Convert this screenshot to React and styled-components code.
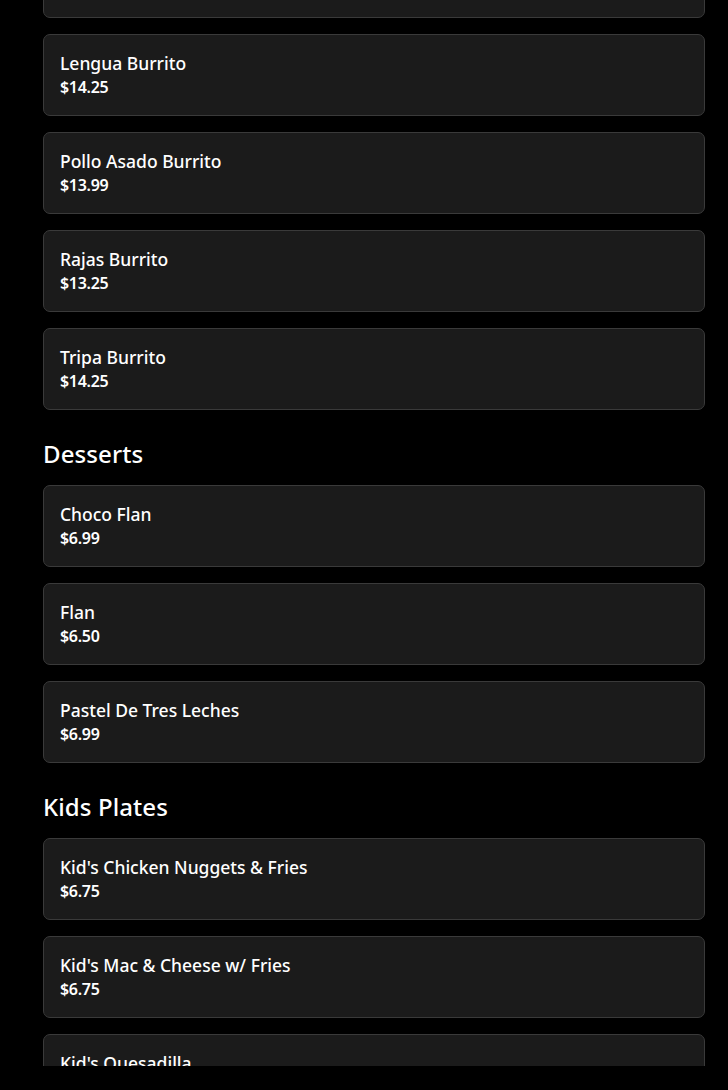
import React from "react";
import styled, { createGlobalStyle } from "styled-components";

const Global = createGlobalStyle`
  html, body { margin: 0; padding: 0; background: #000; }
  body { font-family: "Noto Sans", "Open Sans", sans-serif; color: #fff; overflow: hidden; }
`;

const Page = styled.main`
  padding: 0 23px 0 43px;
  margin-top: -64px;
`;

const Section = styled.section`
  & + & { margin-top: 29px; }
`;

const Heading = styled.h2`
  margin: 0 0 16px;
  font-size: 24px;
  line-height: 30px;
  font-weight: 500;
  letter-spacing: 0.1px;
`;

const List = styled.div`
  display: flex;
  flex-direction: column;
  gap: 16px;
`;

const Card = styled.div`
  background: #1b1b1b;
  border: 1px solid #3a3a3a;
  border-radius: 7px;
  padding: 16px;
  display: flex;
  flex-direction: column;
`;

const Name = styled.div`
  font-size: 17.5px;
  line-height: 24px;
  font-weight: 500;
`;

const Price = styled.div`
  font-size: 16px;
  line-height: 24px;
  font-weight: 600;
  letter-spacing: -0.3px;
`;

const BottomBar = styled.div`
  position: fixed;
  left: 0;
  right: 0;
  bottom: 0;
  height: 24px;
  background: #000;
`;

const sections = [
  {
    title: null,
    items: [
      ["Carnitas Burrito", "$13.99"],
      ["Lengua Burrito", "$14.25"],
      ["Pollo Asado Burrito", "$13.99"],
      ["Rajas Burrito", "$13.25"],
      ["Tripa Burrito", "$14.25"],
    ],
  },
  {
    title: "Desserts",
    items: [
      ["Choco Flan", "$6.99"],
      ["Flan", "$6.50"],
      ["Pastel De Tres Leches", "$6.99"],
    ],
  },
  {
    title: "Kids Plates",
    items: [
      ["Kid's Chicken Nuggets & Fries", "$6.75"],
      ["Kid's Mac & Cheese w/ Fries", "$6.75"],
      ["Kid's Quesadilla", "$6.75"],
    ],
  },
];

export default function App() {
  return (
    <>
      <Global />
      <Page>
        {sections.map((s, i) => (
          <Section key={i}>
            {s.title && <Heading>{s.title}</Heading>}
            <List>
              {s.items.map(([n, p]) => (
                <Card key={n}>
                  <Name>{n}</Name>
                  <Price>{p}</Price>
                </Card>
              ))}
            </List>
          </Section>
        ))}
      </Page>
      <BottomBar />
    </>
  );
}
